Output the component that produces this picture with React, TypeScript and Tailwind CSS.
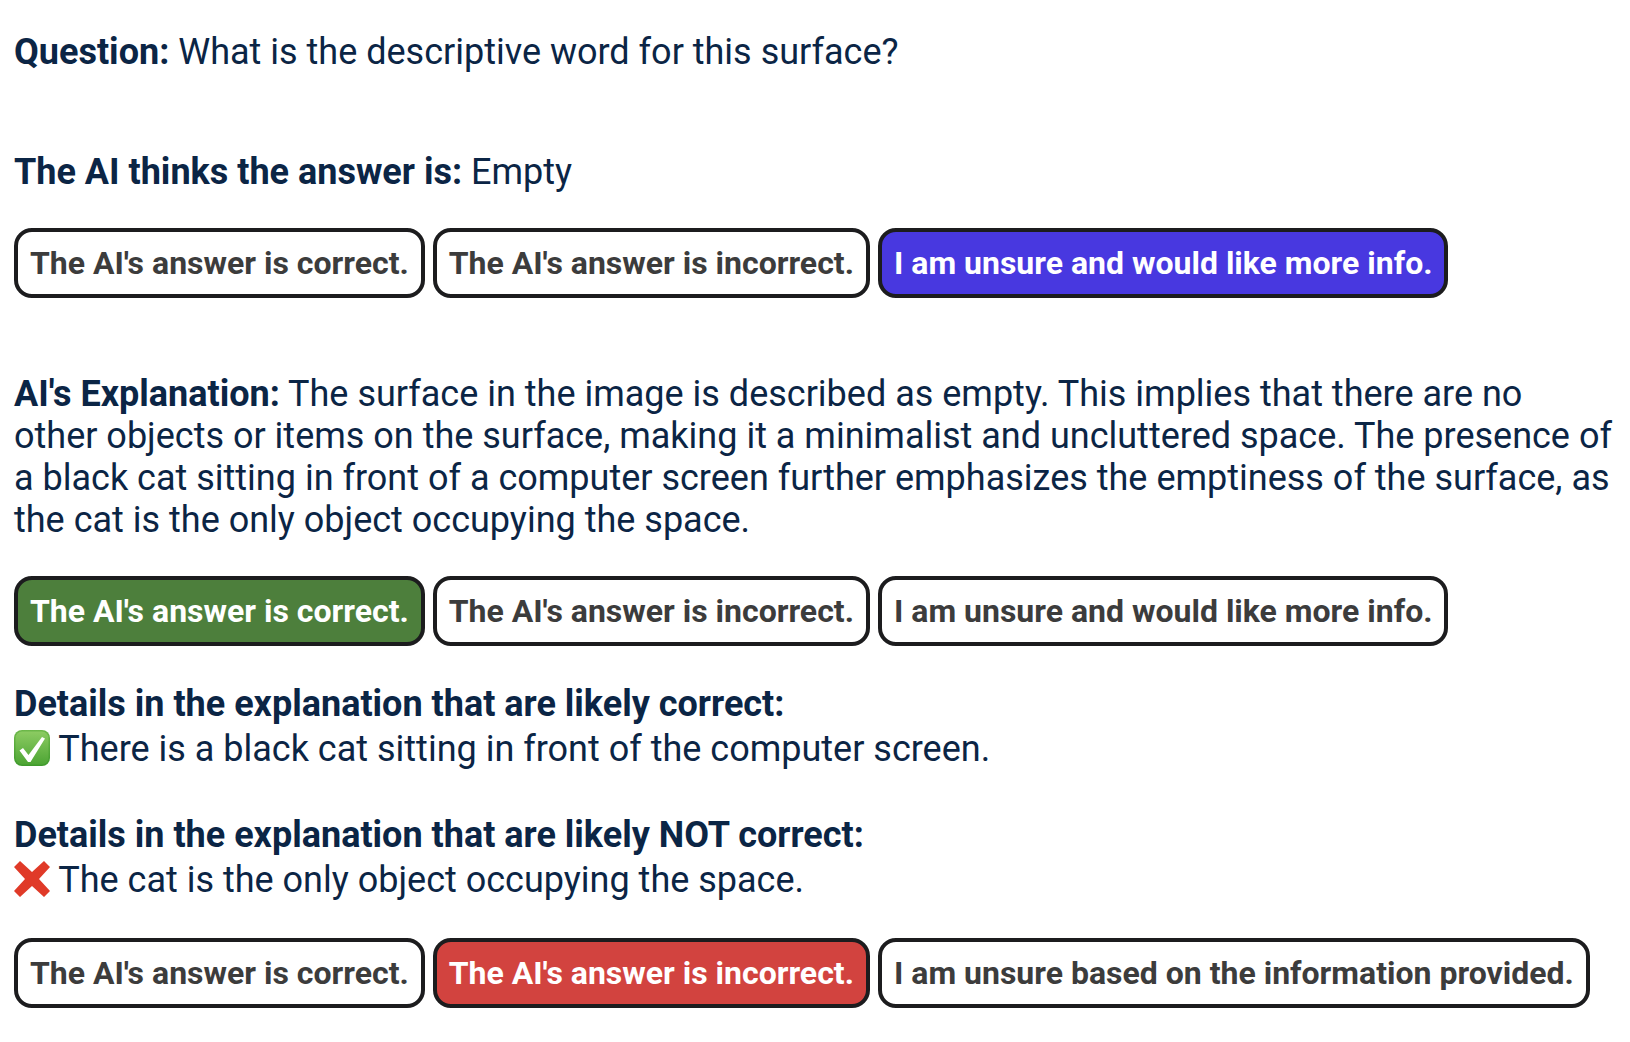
import React from 'react';

const ink = 'text-[#0b2545]';

type BtnProps = { label: string; tone?: 'plain' | 'blue' | 'green' | 'red' };

const Btn = ({ label, tone = 'plain' }: BtnProps) => {
  const tones = {
    plain: 'bg-white text-[#3c3c3c]',
    blue: 'bg-[#4838e0] text-white',
    green: 'bg-[#4d7f3c] text-white',
    red: 'bg-[#d2433f] text-white',
  };
  return (
    <button className={`h-[70px] px-[12px] rounded-[18px] border-[4px] border-[#1c1c1e] font-bold text-[32px] leading-none whitespace-nowrap ${tones[tone]}`}>
      {label}
    </button>
  );
};

const Row = ({ children }: { children: React.ReactNode }) => (
  <div className="flex gap-[8px]">{children}</div>
);

const CheckEmoji = () => (
  <svg viewBox="0 0 36 36" className="inline-block w-[36px] h-[36px] align-[-5px]">
    <defs>
      <linearGradient id="checkRim" x1="0" y1="0" x2="0" y2="1">
        <stop offset="0" stopColor="#6db84a" />
        <stop offset="1" stopColor="#3f9a2c" />
      </linearGradient>
      <linearGradient id="checkFill" x1="0" y1="0" x2="0" y2="1">
        <stop offset="0" stopColor="#8ccb62" />
        <stop offset="1" stopColor="#4da534" />
      </linearGradient>
    </defs>
    <rect x="0" y="0" width="36" height="36" rx="8" fill="url(#checkRim)" />
    <rect x="1.5" y="1.5" width="33" height="33" rx="6.5" fill="url(#checkFill)" />
    <path d="M5.5 20.5 L9 18 L14.5 25 L28 7 L31 8.5 L16.5 32 L14 32 Z" fill="#ffffff" />
  </svg>
);

const CrossEmoji = () => (
  <svg viewBox="0 0 36 36" className="inline-block w-[36px] h-[36px] align-[-5px]">
    <path d="M6 0 L18 11 L30 0 L36 6 L25 18 L36 30 L30 36 L18 25 L6 36 L0 30 L11 18 L0 6 Z" fill="#e03a28" />
  </svg>
);

export default function App() {
  return (
    <div className={`w-[1630px] h-[1042px] bg-white pl-[14px] pt-[31px] overflow-hidden text-[36px] leading-[42px] ${ink}`} style={{ fontFamily: 'Roboto, sans-serif' }}>
      <p><b>Question:</b> What is the descriptive word for this surface?</p>
      <p className="mt-[78px]"><b>The AI thinks the answer is:</b> Empty</p>
      <div className="mt-[35px]">
        <Row>
          <Btn label="The AI's answer is correct." />
          <Btn label="The AI's answer is incorrect." />
          <Btn label="I am unsure and would like more info." tone="blue" />
        </Row>
      </div>
      <p className="mt-[75px]">
        <b>AI's Explanation:</b> The surface in the image is described as empty. This implies that there are no<br />
        other objects or items on the surface, making it a minimalist and uncluttered space. The presence of<br />
        a black cat sitting in front of a computer screen further emphasizes the emptiness of the surface, as<br />
        the cat is the only object occupying the space.
      </p>
      <div className="mt-[35px]">
        <Row>
          <Btn label="The AI's answer is correct." tone="green" />
          <Btn label="The AI's answer is incorrect." />
          <Btn label="I am unsure and would like more info." />
        </Row>
      </div>
      <p className="mt-[37px]"><b>Details in the explanation that are likely correct:</b></p>
      <p className="mt-[3px]"><CheckEmoji /> There is a black cat sitting in front of the computer screen.</p>
      <p className="mt-[44px]"><b>Details in the explanation that are likely NOT correct:</b></p>
      <p className="mt-[3px]"><CrossEmoji /> The cat is the only object occupying the space.</p>
      <div className="mt-[37px]">
        <Row>
          <Btn label="The AI's answer is correct." />
          <Btn label="The AI's answer is incorrect." tone="red" />
          <Btn label="I am unsure based on the information provided." />
        </Row>
      </div>
    </div>
  );
}
